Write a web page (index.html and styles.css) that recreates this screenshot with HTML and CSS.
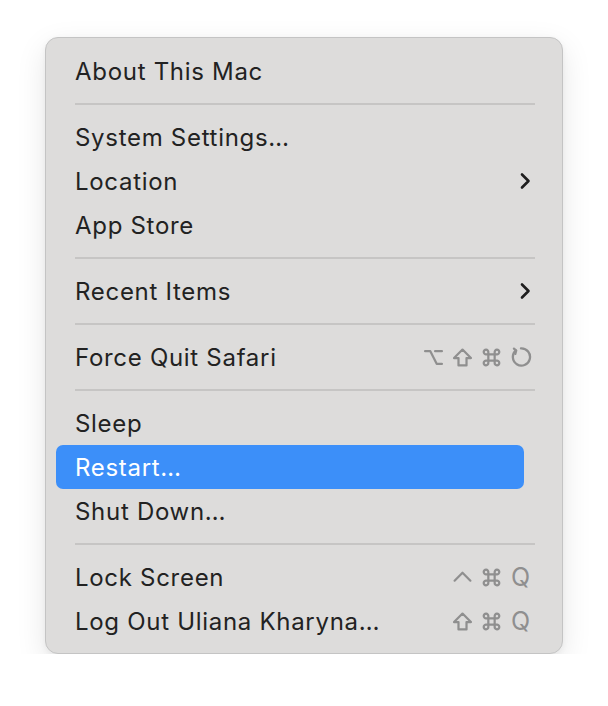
FILE: index.html
```html
<!DOCTYPE html>
<html lang="en">
<head>
  <meta charset="UTF-8">
  <meta name="viewport" content="width=device-width, initial-scale=1.0">
  <title>Apple Menu</title>
  <link rel="stylesheet" href="styles.css">
</head>
<body>
<div class="menu">
  <div class="item"><span class="label">About This Mac</span></div>
  <div class="sep"></div>

  <div class="item"><span class="label">System Settings…</span></div>
  <div class="item"><span class="label">Location</span>
    <svg class="chevron" viewBox="0 0 12 18"><path d="M3 2.5 L9.5 9 L3 15.5" /></svg>
  </div>
  <div class="item"><span class="label">App Store</span></div>
  <div class="sep"></div>

  <div class="item"><span class="label">Recent Items</span>
    <svg class="chevron" viewBox="0 0 12 18"><path d="M3 2.5 L9.5 9 L3 15.5" /></svg>
  </div>
  <div class="sep"></div>

  <div class="item"><span class="label">Force Quit Safari</span>
    <span class="keys">
      <span class="key"><svg viewBox="0 0 18 18"><path d="M1 3 H6 L12 15 H17 M10.5 3 H17" /></svg></span>
      <span class="key"><svg viewBox="0 0 18 18"><path d="M9 1.5 L17 9.5 H12.8 V16.5 H5.2 V9.5 H1 Z" /></svg></span>
      <span class="key"><svg viewBox="0 0 18 18"><path d="M6 14 V4 A2.2 2.2 0 1 0 4 6 H14 A2.2 2.2 0 1 0 12 4 V14 A2.2 2.2 0 1 0 14 12 H4 A2.2 2.2 0 1 0 6 14 Z" /></svg></span>
      <span class="key"><svg class="reload" viewBox="0 0 20 20"><path d="M5.4 4 A7.8 7.8 0 1 0 10 2.2" /><path d="M3.6 2.4 L5.6 4.2 L4.8 7.2" /></svg></span>
    </span>
  </div>
  <div class="sep"></div>

  <div class="item"><span class="label">Sleep</span></div>
  <div class="item active"><span class="label">Restart…</span></div>
  <div class="item"><span class="label">Shut Down…</span></div>
  <div class="sep"></div>

  <div class="item"><span class="label">Lock Screen</span>
    <span class="keys">
      <span class="key"><svg viewBox="0 0 18 18"><path d="M1.5 12 L9 4.5 L16.5 12" /></svg></span>
      <span class="key"><svg viewBox="0 0 18 18"><path d="M6 14 V4 A2.2 2.2 0 1 0 4 6 H14 A2.2 2.2 0 1 0 12 4 V14 A2.2 2.2 0 1 0 14 12 H4 A2.2 2.2 0 1 0 6 14 Z" /></svg></span>
      <span class="key q">Q</span>
    </span>
  </div>
  <div class="item"><span class="label">Log Out Uliana Kharyna…</span>
    <span class="keys">
      <span class="key"><svg viewBox="0 0 18 18"><path d="M9 1.5 L17 9.5 H12.8 V16.5 H5.2 V9.5 H1 Z" /></svg></span>
      <span class="key"><svg viewBox="0 0 18 18"><path d="M6 14 V4 A2.2 2.2 0 1 0 4 6 H14 A2.2 2.2 0 1 0 12 4 V14 A2.2 2.2 0 1 0 14 12 H4 A2.2 2.2 0 1 0 6 14 Z" /></svg></span>
      <span class="key q">Q</span>
    </span>
  </div>
</div>
</body>
</html>
```

FILE: styles.css
```css
body {
  margin: 0;
  background: #fff;
  font-family: Inter, "Noto Sans", sans-serif;
}

.menu {
  margin: 37px 0 0 45px;
  width: 516px;
  padding: 11px 0 10px;
  background-color: #dddcdb;
  border: 1px solid #c4c4c4;
  border-radius: 13px;
  box-shadow: 0 10px 30px rgba(0, 0, 0, 0.10), 0 2px 6px rgba(0, 0, 0, 0.05);
}

.item {
  position: relative;
  display: flex;
  align-items: center;
  height: 44px;
  margin: 0 27px 0 10px;
  padding-left: 19px;
  font-size: 24px;
  color: #222;
  letter-spacing: 0.7px;
}

.label {
  position: relative;
}

.item.active {
  color: #fff;
}

.item.active::before {
  position: absolute;
  content: "";
  left: 0;
  top: 0;
  bottom: 0;
  right: 11px;
  border-radius: 7px;
  background-color: #3c8ff9;
}

.sep {
  height: 2px;
  margin: 10px 27px 10px 29px;
  background-color: #c6c5c4;
}

.chevron {
  margin-left: auto;
  margin-right: 4px;
  width: 12px;
  height: 18px;
  fill: none;
  stroke: #1e1e1e;
  stroke-width: 2.6;
  stroke-linecap: round;
  stroke-linejoin: round;
}

.keys {
  margin-left: auto;
  display: flex;
  color: #8f8f8f;
}

.key {
  width: 29px;
  display: flex;
  justify-content: center;
  align-items: center;
}

.key svg {
  flex: none;
  width: 19px;
  height: 19px;
  fill: none;
  stroke: #8f8f8f;
  stroke-width: 2.1;
  stroke-linecap: round;
  stroke-linejoin: round;
}

.key svg.reload {
  width: 22px;
  height: 22px;
}

.key.q {
  font-size: 25px;
  letter-spacing: 0;
}
```
